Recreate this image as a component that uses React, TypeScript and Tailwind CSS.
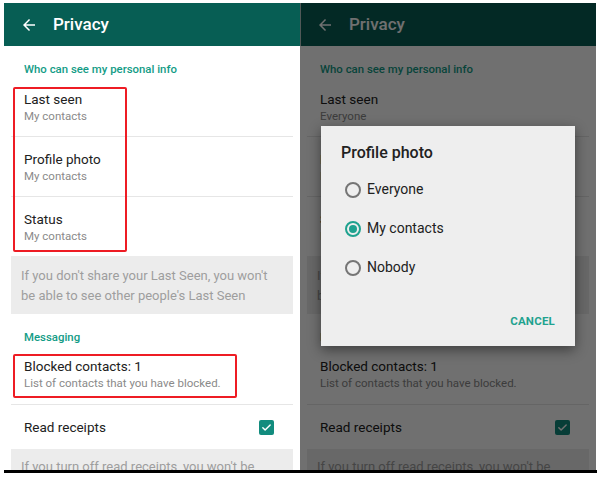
import React from "react";

const FONT = { fontFamily: "Roboto, 'Noto Sans', Arial, sans-serif" };

function BackArrow() {
  return (
    <svg width="18" height="18" viewBox="0 0 24 24" className="shrink-0">
      <path
        fill="currentColor"
        d="M20 11H7.83l5.59-5.59L12 4l-8 8 8 8 1.41-1.41L7.83 13H20v-2z"
      />
    </svg>
  );
}

function Item({ title, sub, divider }: { title: string; sub: string; divider?: boolean }) {
  return (
    <div>
      <div className="px-[20px] pt-[14px] pb-[12px]">
        <div className="text-[13.5px] leading-[17px] text-[#212121]">{title}</div>
        <div className="text-[11.5px] leading-[16px] text-[#8a8a8a]">{sub}</div>
      </div>
      {divider && <div className="mx-[7px] h-px bg-[#e6e6e6]" />}
    </div>
  );
}

function Panel({ lastSeen, children }: { lastSeen: string; children?: React.ReactNode }) {
  return (
    <div className="relative w-[296px] h-full bg-white overflow-hidden shrink-0">
      <header className="h-[43px] bg-[#075e54] flex items-center text-white">
        <div className="ml-[16px]">
          <BackArrow />
        </div>
        <span className="ml-[15px] text-[17px] font-medium leading-none">Privacy</span>
      </header>
      <div className="pt-[15px] pl-[20px] text-[11.4px] leading-[16px] font-medium text-[#139c86]">
        Who can see my personal info
      </div>
      <Item title="Last seen" sub={lastSeen} divider />
      <Item title="Profile photo" sub="My contacts" divider />
      <Item title="Status" sub="My contacts" />
      <div className="mx-[7px] bg-[#ececec] pt-[10px] pb-[8px] px-[10px] text-[13px] leading-[20px] text-[#9e9e9e]">
        If you don't share your Last Seen, you won't
        <br />
        be able to see other people's Last Seen
      </div>
      <div className="pt-[15px] pl-[20px] text-[11.4px] leading-[16px] font-medium text-[#139c86]">
        Messaging
      </div>
      <div className="px-[20px] pt-[12px] pb-[13px]">
        <div className="text-[13.5px] leading-[18px] text-[#212121]">Blocked contacts: 1</div>
        <div className="text-[11.5px] leading-[16px] text-[#8a8a8a]">
          List of contacts that you have blocked.
        </div>
      </div>
      <div className="mx-[7px] h-px bg-[#e6e6e6]" />
      <div className="h-[44px] flex items-center justify-between pl-[20px] pr-[26px]">
        <span className="text-[13.5px] text-[#212121]">Read receipts</span>
        <span className="w-[15px] h-[15px] rounded-[2px] bg-[#128c7e] flex items-center justify-center">
          <svg width="11" height="11" viewBox="0 0 24 24">
            <path
              d="M4 12.5l5 5L20 6.5"
              fill="none"
              stroke="white"
              strokeWidth="3.2"
              strokeLinecap="round"
              strokeLinejoin="round"
            />
          </svg>
        </span>
      </div>
      <div className="mx-[7px] bg-[#ececec] pt-[8px] pb-[8px] px-[10px] text-[13px] leading-[20px] text-[#9e9e9e]">
        If you turn off read receipts, you won't be
      </div>
      {children}
    </div>
  );
}

function Radio({ label, checked }: { label: string; checked?: boolean }) {
  return (
    <div className="h-[39px] flex items-center pl-[24px]">
      <span
        className={
          checked
            ? "w-[16px] h-[16px] rounded-full border-2 border-[#1fa28f] flex items-center justify-center"
            : "w-[16px] h-[16px] rounded-full border-2 border-[#757575]"
        }
      >
        {checked && <span className="w-[8px] h-[8px] rounded-full bg-[#1fa28f]" />}
      </span>
      <span className="ml-[6px] text-[14px] text-[#212121]">{label}</span>
    </div>
  );
}

export default function App() {
  return (
    <div className="w-[599px] h-[479px] bg-white overflow-hidden" style={FONT}>
      <div className="pt-[3px] h-[470px] flex overflow-hidden">
        <div className="w-[4px] shrink-0" />
        <Panel lastSeen="My contacts">
          <div className="absolute left-[9px] top-[84px] w-[114px] h-[165px] border-2 border-[#ee1c24] rounded-[2px]" />
          <div className="absolute left-[9px] top-[351px] w-[224px] h-[44px] border-2 border-[#ee1c24] rounded-[2px]" />
        </Panel>
        <Panel lastSeen="Everyone">
          <div className="absolute left-0 top-0 w-px h-[43px] bg-[#b9c9c6]" />
          <div className="absolute inset-0 bg-black/[0.56]" />
          <div className="absolute left-[21px] top-[123px] w-[254px] h-[220px] bg-[#eeeeee] shadow-[0_4px_12px_rgba(0,0,0,0.45)]">
            <div className="pt-[17px] pl-[20px] text-[16px] leading-[20px] font-medium text-[#212121]">
              Profile photo
            </div>
            <div className="mt-[7px]">
              <Radio label="Everyone" />
              <Radio label="My contacts" checked />
              <Radio label="Nobody" />
            </div>
            <div className="mt-[26px] pr-[20px] text-right text-[11.5px] leading-[16px] font-bold tracking-[0.2px] text-[#1fa28f]">
              CANCEL
            </div>
          </div>
        </Panel>
      </div>
      <div className="ml-[4px] w-[593px] h-[3px] bg-black" />
    </div>
  );
}
